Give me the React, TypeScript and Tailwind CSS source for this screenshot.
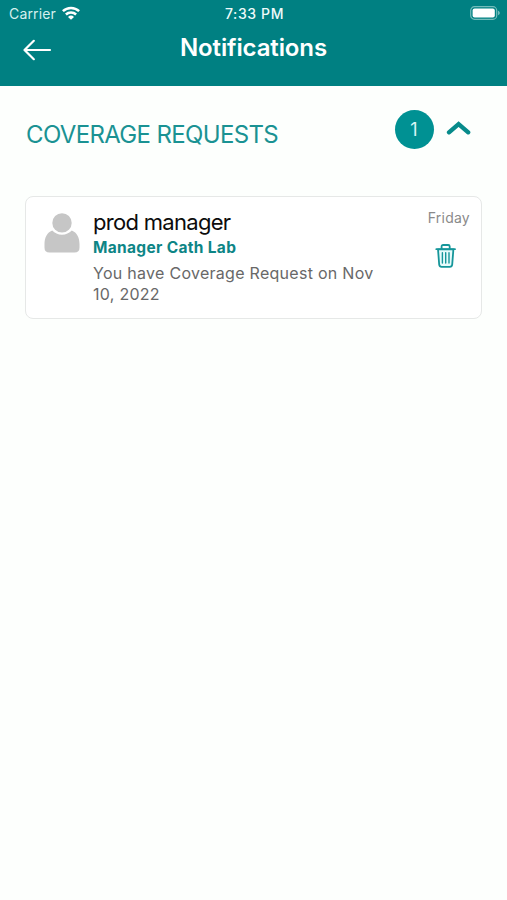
function StatusBar() {
  return (
    <div className="flex h-7 items-center pl-[9px] pr-[7px] text-[14px] leading-7">
      <div className="flex flex-1 items-center gap-[6px] text-[#d5f0ee]">
        <span className="tracking-[0.15px]">Carrier</span>
        <svg className="-mt-[2px]" width="18" height="14" viewBox="0 0 18 14" fill="none" stroke="#fff" strokeWidth="2.5">
          <path d="M0.9 5.2A11.6 11.6 0 0 1 17.1 5.2" />
          <path d="M3.9 8.5A7.3 7.3 0 0 1 14.1 8.5" />
          <path d="M9 13.8 6 10.9A4.3 4.3 0 0 1 12 10.9Z" fill="#fff" stroke="none" />
        </svg>
      </div>
      <span className="font-medium tracking-[0.6px] text-[#effafa]">7:33 PM</span>
      <div className="flex flex-1 justify-end">
        <svg className="-mt-[2px] -mr-px" width="31" height="14" viewBox="0 0 31 14">
          <rect x="0.7" y="0.7" width="26" height="12.6" rx="3.8" fill="none" stroke="#73bcbb" strokeWidth="1.2" />
          <rect x="2.6" y="2.5" width="22.2" height="9" rx="2" fill="#fff" />
          <path d="M28 4.8C30.4 5.5 30.4 8.5 28 9.2Z" fill="#73bcbb" />
        </svg>
      </div>
    </div>
  );
}

function Header() {
  return (
    <header className="h-[86px] bg-[#008082] text-white">
      <StatusBar />
      <div className="grid h-[39px] grid-cols-[1fr_auto_1fr] items-center">
        <button aria-label="Back" className="ml-[23px] mt-[4px] w-[29px]">
          <svg width="29" height="22" viewBox="0 0 29 22" fill="none" stroke="#fff" strokeWidth="2.2" strokeLinecap="round" strokeLinejoin="round">
            <path d="M27 11H1.5M10.8 1.8 1.5 11l9.3 9.2" />
          </svg>
        </button>
        <h1 className="pt-px text-[24px] font-semibold leading-[38px] tracking-[-0.12px]">Notifications</h1>
      </div>
    </header>
  );
}

function TrashIcon() {
  return (
    <svg width="22" height="24" viewBox="0 0 22 24" fill="none" stroke="#16969a" strokeLinecap="round" strokeLinejoin="round">
      <path d="M3 5.3 4.2 20.6Q4.5 22.8 6.6 22.8H14.8Q16.9 22.8 17.2 20.6L18.4 5.3Z" fill="#e6fbfb" strokeWidth="1.8" />
      <path d="M1.3 5.2H20M6.6 5V2.5Q6.6 1 8.1 1H13.2Q14.7 1 14.7 2.5V5" strokeWidth="1.8" />
      <path d="M7.4 8.7V19M10.7 8.7V19M14 8.7V19" strokeWidth="1.4" />
    </svg>
  );
}

function NotificationCard() {
  return (
    <article className="mx-[25px] mt-[46px] flex h-[123px] rounded-[8px] border border-[#e6e8e7] bg-white pl-[18px] pr-[11px]">
      <svg className="mt-[16px] shrink-0" width="36" height="40" viewBox="0 0 36 40" fill="#c6c6c6">
        <circle cx="18" cy="9.9" r="9.7" />
        <path d="M8.2 17.5C10.8 20.2 14 21.7 18 21.7S25.2 20.2 27.8 17.5C33 19.5 35.5 24.7 35.5 31V34.7Q35.5 39.5 30.5 39.5H5.5Q0.5 39.5 0.5 34.7V31C0.5 24.7 3 19.5 8.2 17.5Z" />
      </svg>
      <div className="ml-[13px] flex-1 pt-[11px]">
        <h3 className="text-[22px] leading-7 tracking-[-0.7px] text-[#0c0c0c]">prod manager</h3>
        <p className="pt-px text-[15.5px] font-bold leading-[22px] tracking-[0.32px] text-[#0d8586]">Manager Cath Lab</p>
        <p className="mt-[4px] w-[290px] text-[16px] leading-[20.5px] tracking-[0.28px] text-[#686868]">
          You have Coverage Request on Nov 10, 2022
        </p>
      </div>
      <div className="flex flex-col items-end pt-[11px]">
        <span className="text-[14px] leading-5 tracking-[0.25px] text-[#8a8a8a]">Friday</span>
        <button aria-label="Delete" className="mr-[13px] mt-[16px]">
          <TrashIcon />
        </button>
      </div>
    </article>
  );
}

export default function App() {
  return (
    <main className="min-h-[900px] w-full bg-[#fdfffd] font-['Inter','Liberation_Sans',sans-serif]">
      <Header />
      <section>
        <div className="flex h-[64px] items-start pl-[26px] pr-[36px] pt-[23px]">
          <h2 className="mt-[10px] flex-1 text-[24px] leading-8 tracking-[-0.65px] text-[#1a9293]">COVERAGE REQUESTS</h2>
          <span className="mt-[0.5px] flex size-[39px] items-center justify-center rounded-full bg-[#009193] text-[18px] text-[#d8f6f5]">1</span>
          <svg className="ml-[12.5px] mt-[11px]" width="25" height="16" viewBox="0 0 25 16" fill="none" stroke="#078b8b" strokeWidth="4.3" strokeLinecap="round" strokeLinejoin="miter">
            <path d="M3 12.3 12.6 4 22.2 12.3" />
          </svg>
        </div>
        <NotificationCard />
      </section>
    </main>
  );
}
